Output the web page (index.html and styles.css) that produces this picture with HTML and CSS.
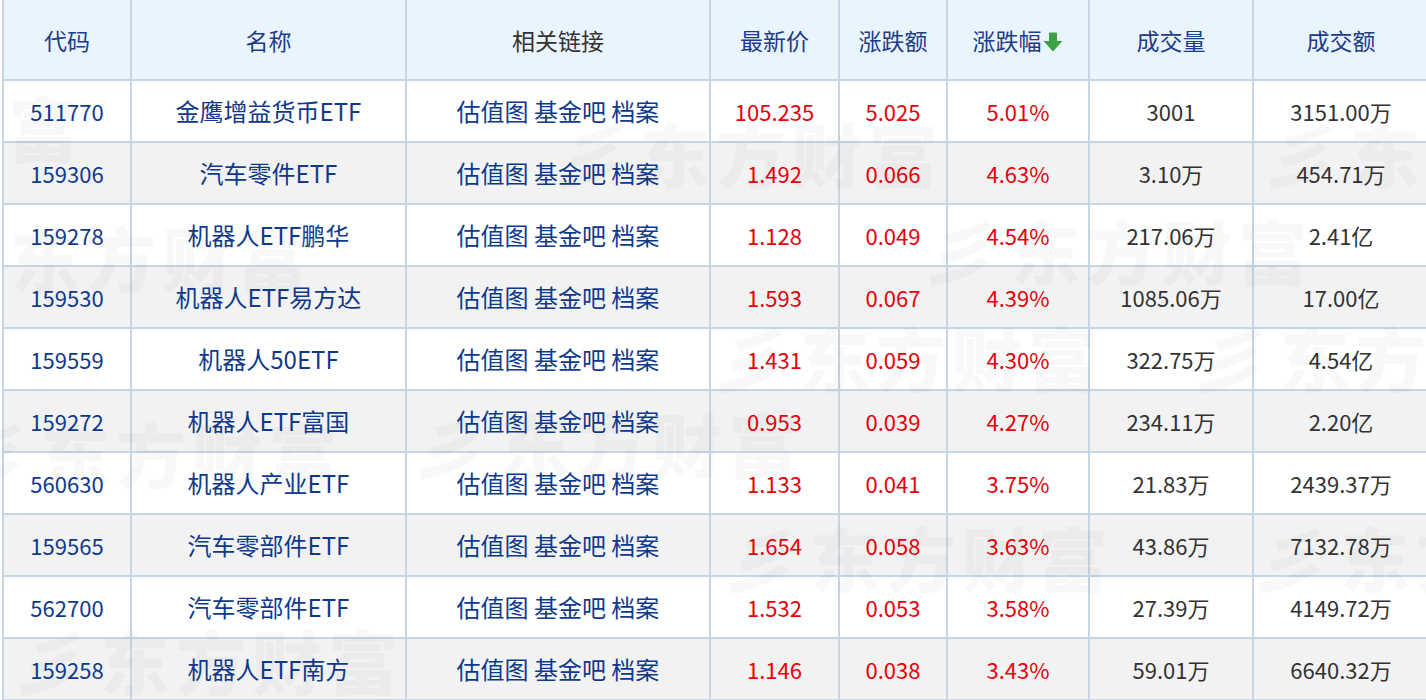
FILE: index.html
```html
<!DOCTYPE html>
<html lang="zh-CN">
<head>
<meta charset="utf-8">
<title>ETF 涨幅排行</title>
<link rel="stylesheet" href="styles.css">
</head>
<body>
<div class="wrap">
<table class="grid">
<colgroup>
<col class="w1"><col class="w2"><col class="w3"><col class="w4"><col class="w5"><col class="w6"><col class="w7"><col class="w8">
</colgroup>
<thead>
<tr>
<th>代码</th><th>名称</th><th class="plain">相关链接</th><th>最新价</th><th>涨跌额</th>
<th>涨跌幅<svg class="sort" width="22" height="22" viewBox="0 0 22 22"><path d="M7 2.5Q7 1.5 8 1.5h6q1 0 1 1V10h5.5L11 20.5 1.5 10H7z" fill="#3ba244"/></svg></th>
<th>成交量</th><th>成交额</th>
</tr>
</thead>
<tbody>
<tr><td class="lk n">511770</td><td class="lk">金鹰增益货币ETF</td><td class="lk">估值图 基金吧 档案</td><td class="up n">105.235</td><td class="up n">5.025</td><td class="up n">5.01%</td><td class="num n">3001</td><td class="num n">3151.00万</td></tr>
<tr><td class="lk n">159306</td><td class="lk">汽车零件ETF</td><td class="lk">估值图 基金吧 档案</td><td class="up n">1.492</td><td class="up n">0.066</td><td class="up n">4.63%</td><td class="num n">3.10万</td><td class="num n">454.71万</td></tr>
<tr><td class="lk n">159278</td><td class="lk">机器人ETF鹏华</td><td class="lk">估值图 基金吧 档案</td><td class="up n">1.128</td><td class="up n">0.049</td><td class="up n">4.54%</td><td class="num n">217.06万</td><td class="num n">2.41亿</td></tr>
<tr><td class="lk n">159530</td><td class="lk">机器人ETF易方达</td><td class="lk">估值图 基金吧 档案</td><td class="up n">1.593</td><td class="up n">0.067</td><td class="up n">4.39%</td><td class="num n">1085.06万</td><td class="num n">17.00亿</td></tr>
<tr><td class="lk n">159559</td><td class="lk">机器人50ETF</td><td class="lk">估值图 基金吧 档案</td><td class="up n">1.431</td><td class="up n">0.059</td><td class="up n">4.30%</td><td class="num n">322.75万</td><td class="num n">4.54亿</td></tr>
<tr><td class="lk n">159272</td><td class="lk">机器人ETF富国</td><td class="lk">估值图 基金吧 档案</td><td class="up n">0.953</td><td class="up n">0.039</td><td class="up n">4.27%</td><td class="num n">234.11万</td><td class="num n">2.20亿</td></tr>
<tr><td class="lk n">560630</td><td class="lk">机器人产业ETF</td><td class="lk">估值图 基金吧 档案</td><td class="up n">1.133</td><td class="up n">0.041</td><td class="up n">3.75%</td><td class="num n">21.83万</td><td class="num n">2439.37万</td></tr>
<tr><td class="lk n">159565</td><td class="lk">汽车零部件ETF</td><td class="lk">估值图 基金吧 档案</td><td class="up n">1.654</td><td class="up n">0.058</td><td class="up n">3.63%</td><td class="num n">43.86万</td><td class="num n">7132.78万</td></tr>
<tr><td class="lk n">562700</td><td class="lk">汽车零部件ETF</td><td class="lk">估值图 基金吧 档案</td><td class="up n">1.532</td><td class="up n">0.053</td><td class="up n">3.58%</td><td class="num n">27.39万</td><td class="num n">4149.72万</td></tr>
<tr><td class="lk n">159258</td><td class="lk">机器人ETF南方</td><td class="lk">估值图 基金吧 档案</td><td class="up n">1.146</td><td class="up n">0.038</td><td class="up n">3.43%</td><td class="num n">59.01万</td><td class="num n">6640.32万</td></tr>
</tbody>
</table>
<div class="wm">
<div class="mark m1"><span class="logo">彡</span>东方财富</div>
<div class="mark m2"><span class="logo">彡</span>东方财富</div>
<div class="mark m3"><span class="logo">彡</span>东方财富</div>
<div class="mark m4"><span class="logo">彡</span>东方财富</div>
<div class="mark m5"><span class="logo">彡</span>东方财富</div>
<div class="mark m6"><span class="logo">彡</span>东方财富</div>
<div class="mark m7"><span class="logo">彡</span>东方财富</div>
<div class="mark m8"><span class="logo">彡</span>东方财富</div>
<div class="mark m9"><span class="logo">彡</span>东方财富</div>
<div class="mark m10"><span class="logo">彡</span>东方财富</div>
<div class="mark m11"><span class="logo">彡</span>东方财富</div>
<div class="mark m12"><span class="logo">彡</span>东方财富</div>
</div>
</div>
</body>
</html>
```
FILE: styles.css
```css
html, body {
  margin: 0;
  padding: 0;
  background: #fff;
  overflow: hidden;
}
.wrap {
  position: relative;
  width: 1426px;
  height: 700px;
  overflow: hidden;
}
.grid {
  margin-left: 2px;
  border-collapse: separate;
  border-spacing: 0;
  table-layout: fixed;
  width: 1426px;
  font-family: "Noto Sans CJK SC", "Liberation Sans", sans-serif;
  font-size: 24px;
}
.w1 { width: 128px; }
.w2 { width: 275px; }
.w3 { width: 304px; }
.w4 { width: 129px; }
.w5 { width: 108px; }
.w6 { width: 142px; }
.w7 { width: 164px; }
.w8 { width: 176px; }
.grid th, .grid td {
  border-left: 2px solid #c6d5e3;
  border-bottom: 2px solid #c6d5e3;
  text-align: center;
  padding: 0;
  white-space: nowrap;
  overflow: hidden;
  line-height: 30px;
}
.grid th {
  height: 79px;
  background: #e9f4fd;
  color: #1c3d8a;
  font-weight: normal;
  font-size: 23px;
}
.grid th.plain { color: #333; }
.sort {
  vertical-align: -3px;
  margin-left: 0;
}
.grid td {
  height: 60px;
}
.grid td.n { font-size: 22px; }
.grid tbody tr:nth-child(even) td { background: #f2f2f2; }
.grid td.lk { color: #0f3a8c; }
.grid td.up { color: #e8000b; }
.grid td.num { color: #333; }
.wm {
  position: absolute;
  left: 0;
  top: 0;
  width: 1426px;
  height: 700px;
  pointer-events: none;
}
.mark {
  position: absolute;
  font-family: "Noto Sans CJK SC", sans-serif;
  font-weight: 900;
  font-size: 70px;
  letter-spacing: 6px;
  line-height: 1;
  color: rgba(0, 0, 0, 0.028);
  white-space: nowrap;
}
.logo {
  display: inline-block;
  transform: skewX(-20deg);
  margin-right: 4px;
}
.m1 { left: -300px; top: 92px; }
.m2 { left: 560px; top: 118px; }
.m3 { left: 1270px; top: 118px; }
.m4 { left: -70px; top: 222px; }
.m5 { left: 930px; top: 215px; }
.m6 { left: 720px; top: 322px; }
.m7 { left: 1200px; top: 322px; }
.m8 { left: -40px; top: 418px; }
.m9 { left: 420px; top: 408px; }
.m10 { left: 730px; top: 522px; }
.m11 { left: 1260px; top: 522px; }
.m12 { left: 20px; top: 625px; }
```
